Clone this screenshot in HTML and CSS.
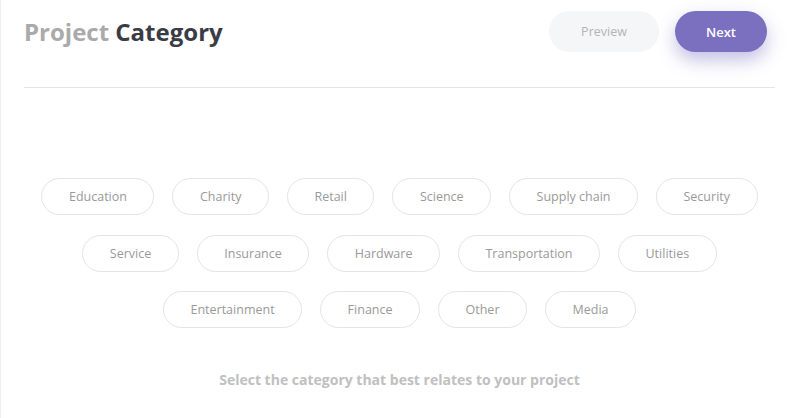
FILE: index.html
```html
<!DOCTYPE html>
<html>
<head>
<meta charset="utf-8">
<link rel="stylesheet" href="styles.css">
</head>
<body>
<div class="page">
  <header class="header">
    <h1 class="title"><span class="title-light">Project</span> Category</h1>
    <div class="actions">
      <button class="btn btn-preview">Preview</button>
      <button class="btn btn-next">Next</button>
    </div>
  </header>
  <hr class="divider">
  <div class="pills">
    <div class="pill-row">
      <span class="pill">Education</span>
      <span class="pill">Charity</span>
      <span class="pill">Retail</span>
      <span class="pill">Science</span>
      <span class="pill">Supply chain</span>
      <span class="pill">Security</span>
    </div>
    <div class="pill-row">
      <span class="pill">Service</span>
      <span class="pill">Insurance</span>
      <span class="pill">Hardware</span>
      <span class="pill">Transportation</span>
      <span class="pill">Utilities</span>
    </div>
    <div class="pill-row">
      <span class="pill">Entertainment</span>
      <span class="pill">Finance</span>
      <span class="pill">Other</span>
      <span class="pill">Media</span>
    </div>
  </div>
  <p class="hint">Select the category that best relates to your project</p>
</div>
</body>
</html>
```

FILE: styles.css
```css
html, body {
  margin: 0;
  padding: 0;
  background: #ffffff;
  font-family: "Open Sans", "Liberation Sans", sans-serif;
}

.page {
  width: 804px;
  height: 418px;
  box-sizing: border-box;
  padding: 11px 29px 0 23px;
  border-left: 1px solid #eeeeee;
  overflow: hidden;
}

.header {
  display: flex;
  align-items: center;
  justify-content: space-between;
  height: 41px;
}

.title {
  margin: 0;
  font-size: 24px;
  font-weight: 700;
  color: #3b3b45;
}

.title-light {
  color: #aaaaaa;
}

.actions {
  display: flex;
  gap: 16px;
  margin-right: 8px;
}

.btn {
  border: none;
  height: 41px;
  border-radius: 21px;
  font-family: inherit;
  font-size: 13px;
  font-weight: 600;
  cursor: pointer;
}

.btn-preview {
  width: 110px;
  background: #f5f6f8;
  color: #b4b4b4;
  font-size: 12.5px;
  font-weight: 400;
}

.btn-next {
  width: 92px;
  background: #7b70c0;
  color: #ffffff;
  box-shadow: 0 8px 18px rgba(123, 112, 192, 0.45);
}

.divider {
  margin: 35px 0 0 0;
  border: none;
  border-top: 1px solid #e6e6e6;
  height: 0;
}

.pills {
  margin-top: 90px;
  display: flex;
  flex-direction: column;
  gap: 19.5px;
}

.pill-row {
  display: flex;
  justify-content: center;
  gap: 18px;
}

.pill {
  box-sizing: border-box;
  height: 37px;
  padding: 0 26.5px;
  display: flex;
  align-items: center;
  border: 1px solid #e4e4e4;
  border-radius: 19px;
  font-size: 12.5px;
  color: #9a9a9a;
}

.hint {
  margin: 42px 0 0 0;
  text-align: center;
  font-size: 14px;
  font-weight: 700;
  color: #c0c0c0;
}
```
